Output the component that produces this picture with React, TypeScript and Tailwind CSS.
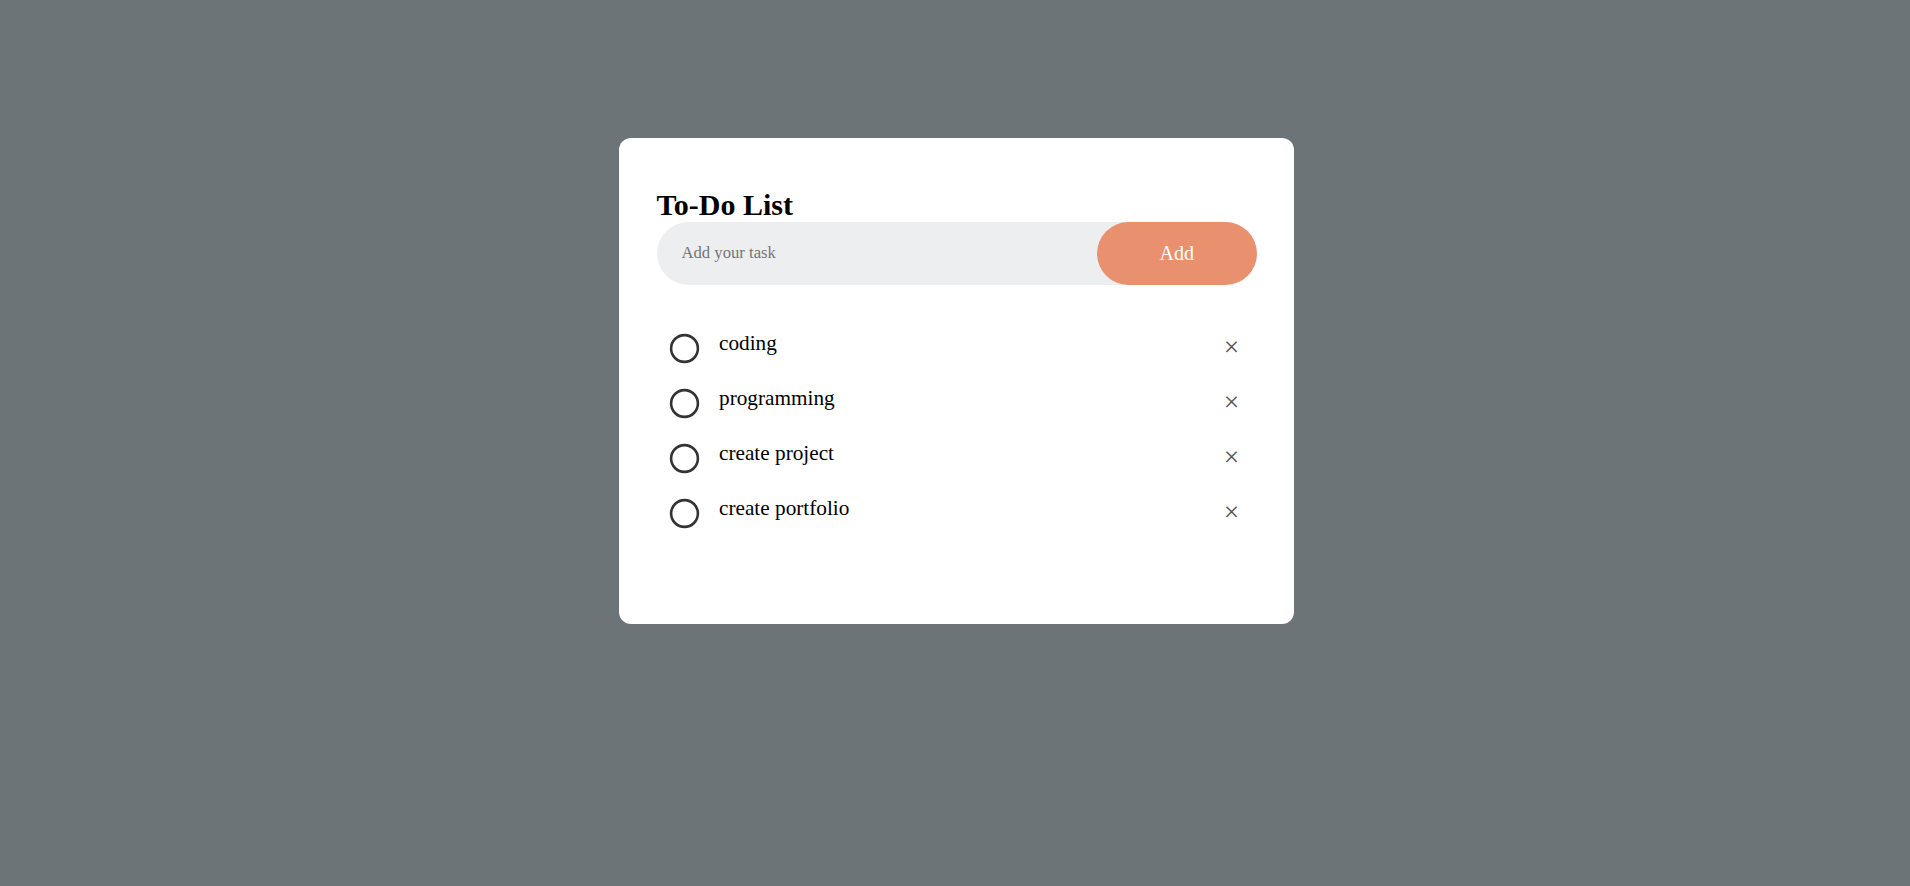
import { useState } from 'react'

interface Task {
  id: number
  text: string
  done: boolean
}

const INITIAL: Task[] = [
  { id: 1, text: 'coding', done: false },
  { id: 2, text: 'programming', done: false },
  { id: 3, text: 'create project', done: false },
  { id: 4, text: 'create portfolio', done: false },
]

function Ring({ checked }: { checked: boolean }) {
  return (
    <svg width="35" height="35" viewBox="0 0 35 35" aria-hidden>
      <circle
        cx="17.5"
        cy="17.5"
        r="13.4"
        fill={checked ? '#e9916e' : 'none'}
        stroke="#333"
        strokeWidth="2.6"
      />
    </svg>
  )
}

export default function App() {
  const [tasks, setTasks] = useState<Task[]>(INITIAL)
  const [draft, setDraft] = useState('')

  const add = () => {
    const text = draft.trim()
    if (!text) return
    setTasks((t) => [...t, { id: Date.now(), text, done: false }])
    setDraft('')
  }

  return (
    <div className="min-h-screen w-full bg-[#6c7477] pt-[138px] pl-[3px] font-['Liberation_Serif','Times_New_Roman',serif]">
      <div className="mx-auto w-[675px] rounded-[12px] bg-white px-[37.5px] pt-[50px] pb-[88px]">
        <h2 className="text-[30px] leading-[33.5px] font-bold text-black">
          To-Do List
        </h2>

        <div className="flex items-center rounded-[37.5px] bg-[#edeef0] pl-[25px]">
          <input
            value={draft}
            onChange={(e) => setDraft(e.target.value)}
            onKeyDown={(e) => e.key === 'Enter' && add()}
            placeholder="Add your task"
            className="min-w-0 flex-1 bg-transparent text-[16.67px] text-black outline-none placeholder:text-[#757575]"
          />
          <button
            type="button"
            onClick={add}
            className="rounded-[50px] bg-[#e9916e] px-[62.5px] py-[20px] text-[20px] leading-[23px] text-white"
          >
            Add
          </button>
        </div>

        <ul className="mt-[31.25px]">
          {tasks.map((t) => (
            <li
              key={t.id}
              onClick={() =>
                setTasks((all) =>
                  all.map((x) => (x.id === t.id ? { ...x, done: !x.done } : x))
                )
              }
              className={`relative cursor-pointer py-[15px] pr-[10px] pl-[62.5px] text-[21.25px] leading-[25px] select-none ${
                t.done ? 'text-[#555] line-through' : 'text-black'
              }`}
            >
              <span className="absolute top-[15px] left-[10px]">
                <Ring checked={t.done} />
              </span>
              {t.text}
              <span
                onClick={(e) => {
                  e.stopPropagation()
                  setTasks((all) => all.filter((x) => x.id !== t.id))
                }}
                className="absolute top-[6.5px] right-0 h-[50px] w-[50px] text-center text-[27.5px] leading-[50px] text-[#555]"
              >
                {'\u00d7'}
              </span>
            </li>
          ))}
        </ul>
      </div>
    </div>
  )
}
